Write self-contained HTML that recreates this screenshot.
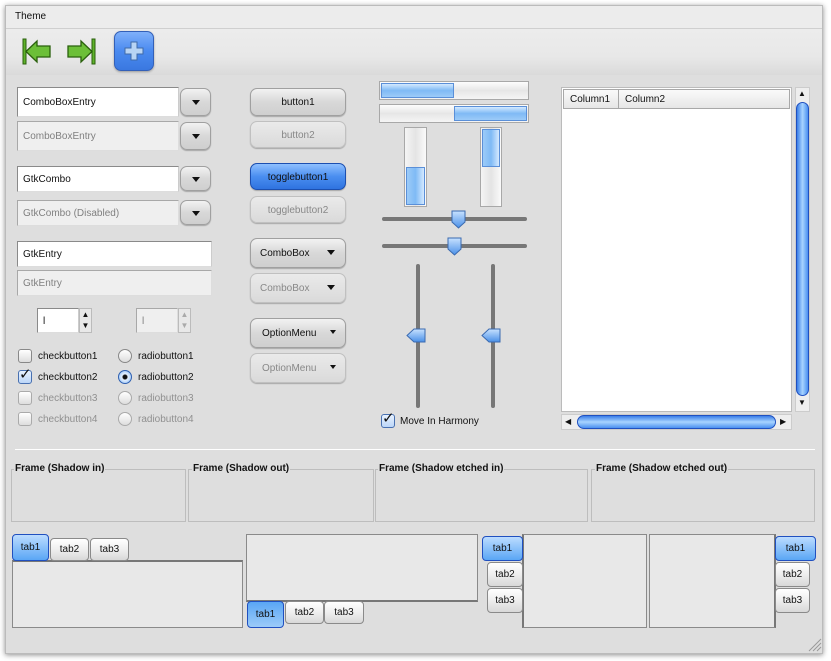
<!DOCTYPE html>
<html><head><meta charset="utf-8"><style>
*{box-sizing:border-box;margin:0;padding:0}
body{width:831px;height:661px;background:#fff;position:relative;overflow:hidden;font-family:"Liberation Sans","DejaVu Sans",sans-serif;font-size:10px;color:#111}
.a{position:absolute}
#win{left:5px;top:5px;width:818px;height:649px;background:#dedede;box-shadow:0 1px 5px rgba(0,0,0,.45);border:1px solid #bbb}
.ent{position:absolute;background:#fff;border:1px solid #8a8a8a;border-right-color:#ccc;border-bottom-color:#ddd;padding-left:5px;display:flex;align-items:center;font-size:10px;padding-top:1px}
.ent.d{background:#efefef;color:#808080;border-color:#a8a8a8 #ddd #ddd #a8a8a8}
.btn{position:absolute;border:1px solid #a0a0a0;border-radius:7px;background:linear-gradient(#f2f2f2,#d8d8d8 50%,#cfcfcf);box-shadow:0 1px 1px rgba(0,0,0,.25);display:flex;align-items:center;justify-content:center;font-size:10px;padding-top:1px}
.btn.d{color:#888;border-color:#c0c0c0;background:linear-gradient(#eaeaea,#dadada)}
.btn.b{background:linear-gradient(#8fc0ff,#4a8ef0 50%,#2f73e0);border-color:#1c4fb0}
.arr{width:0;height:0;border-left:4px solid transparent;border-right:4px solid transparent;border-top:5px solid #111}
.cb{position:absolute;width:14px;height:14px;border:1px solid #888;border-radius:3px;background:linear-gradient(#fff,#ddd)}
.rb{position:absolute;width:14px;height:14px;border:1px solid #888;border-radius:50%;background:linear-gradient(#fff,#ddd)}
.lbl{position:absolute;font-size:10px}
.g{color:#909090}
.fr{position:absolute;border:1px solid #bdbdbd;top:469px;height:53px}
.fl{position:absolute;top:463px;font-size:10px;font-weight:bold;background:#dedede;padding:0 1px}
.tab{position:absolute;border:1px solid #8a8a8a;border-radius:4px;background:linear-gradient(#fff,#eee 50%,#d8d8d8);display:flex;align-items:center;justify-content:center;font-size:10px}
.tab.s{background:linear-gradient(#bcdcff,#5aa6f5);border-color:#2050c0}
.pg{position:absolute;background:#e8e8e8;border:1px solid #8a8a8a}
.pf{position:absolute;background:linear-gradient(#d4e9ff,#7fbaf5 50%,#9ccbf8);border:1px solid #5a8fd8}
.pt{position:absolute;background:linear-gradient(#fdfdfd,#e6e6e6 50%,#f5f5f5);border:1px solid #a8a8a8}
.pv{position:absolute;background:linear-gradient(90deg,#f5f5f5,#e4e4e4 50%,#fafafa);border:1px solid #a8a8a8}
.pfv{position:absolute;background:linear-gradient(90deg,#9ccbf8,#7fbaf5 50%,#d4e9ff);border:1px solid #5a8fd8}
.sp{position:absolute;width:13px;height:25px;border:1px solid #bbb;background:#e8e8e8;font-size:8px;line-height:11px;text-align:center}
</style></head><body>
<div id="win" class="a"></div>
<div class="a" style="left:6px;top:6px;width:816px;height:23px;background:#ececec;border-bottom:1px solid #cfcfcf"></div>
<div class="lbl" style="left:15px;top:11px">Theme</div>
<div class="a" style="left:6px;top:29px;width:816px;height:46px;background:linear-gradient(#ececec,#e8e8e8 60%,#dadada)"></div>
<svg class="a" style="left:20px;top:36px" width="34" height="32"><rect x="3" y="3" width="3" height="25" fill="#5fb22a" stroke="#2a600c"/><path d="M6 15.5 L17 5 V10 H30 V21 H17 V26 Z" fill="#6cbf38" stroke="#2a600c" stroke-width="1.3"/></svg>
<svg class="a" style="left:65px;top:36px" width="34" height="32"><rect x="27" y="3" width="3" height="25" fill="#5fb22a" stroke="#2a600c"/><path d="M27 15.5 L16 5 V10 H3 V21 H16 V26 Z" fill="#6cbf38" stroke="#2a600c" stroke-width="1.3"/></svg>
<div class="a" style="left:114px;top:31px;width:40px;height:40px;border-radius:7px;background:linear-gradient(#7fb0fa,#4a8af0 50%,#3a78e0);border:1px solid #3360b8;box-shadow:0 1px 2px rgba(0,0,0,.3)"></div>
<svg class="a" style="left:122px;top:39px" width="24" height="24"><path d="M9 3H15V9H21V15H15V21H9V15H3V9H9Z" fill="#b8d4f4" stroke="#3f6aa8"/></svg>

<div class="ent" style="left:17px;top:87px;width:162px;height:30px">ComboBoxEntry</div>
<div class="btn" style="left:180px;top:88px;width:31px;height:28px"><div class="arr"></div></div>
<div class="ent d" style="left:17px;top:121px;width:162px;height:30px">ComboBoxEntry</div>
<div class="btn" style="left:180px;top:122px;width:31px;height:28px"><div class="arr"></div></div>
<div class="ent" style="left:17px;top:166px;width:162px;height:26px">GtkCombo</div>
<div class="btn" style="left:180px;top:166px;width:31px;height:25px"><div class="arr"></div></div>
<div class="ent d" style="left:17px;top:200px;width:162px;height:26px">GtkCombo (Disabled)</div>
<div class="btn" style="left:180px;top:200px;width:31px;height:25px"><div class="arr"></div></div>
<div class="ent" style="left:17px;top:241px;width:195px;height:26px">GtkEntry</div>
<div class="ent d" style="left:17px;top:270px;width:195px;height:26px">GtkEntry</div>
<div class="ent" style="left:37px;top:308px;width:42px;height:25px">l</div>
<div class="sp" style="left:79px;top:308px">▲<br>▼</div>
<div class="ent d" style="left:136px;top:308px;width:42px;height:25px">l</div>
<div class="sp" style="left:178px;top:308px;color:#aaa">▲<br>▼</div>

<div class="cb" style="left:18px;top:349px"></div><div class="lbl" style="left:38px;top:351px">checkbutton1</div>
<div class="cb" style="left:18px;top:370px;background:linear-gradient(#e8f2ff,#bcd6f8);border-color:#4870b0"></div><div class="lbl" style="left:19px;top:365px;font-size:15px;font-weight:bold">✓</div><div class="lbl" style="left:38px;top:372px">checkbutton2</div>
<div class="cb" style="left:18px;top:391px;border-color:#aaa"></div><div class="lbl g" style="left:38px;top:393px">checkbutton3</div>
<div class="cb" style="left:18px;top:412px;border-color:#aaa"></div><div class="lbl g" style="left:38px;top:414px">checkbutton4</div>
<div class="rb" style="left:118px;top:349px"></div><div class="lbl" style="left:138px;top:351px">radiobutton1</div>
<div class="rb" style="left:118px;top:370px;background:radial-gradient(circle,#111 0 2px,#e8f2ff 3px,#7db4f4);border-color:#3060b0"></div><div class="lbl" style="left:138px;top:372px">radiobutton2</div>
<div class="rb" style="left:118px;top:391px;border-color:#aaa"></div><div class="lbl g" style="left:138px;top:393px">radiobutton3</div>
<div class="rb" style="left:118px;top:412px;border-color:#aaa"></div><div class="lbl g" style="left:138px;top:414px">radiobutton4</div>

<div class="btn" style="left:250px;top:88px;width:96px;height:28px">button1</div>
<div class="btn d" style="left:250px;top:121px;width:96px;height:27px">button2</div>
<div class="btn b" style="left:250px;top:163px;width:96px;height:27px">togglebutton1</div>
<div class="btn d" style="left:250px;top:196px;width:96px;height:27px">togglebutton2</div>
<div class="btn" style="left:250px;top:238px;width:96px;height:30px;justify-content:flex-start;padding-left:9px">ComboBox<div class="arr" style="position:absolute;right:10px;top:11px"></div></div>
<div class="btn d" style="left:250px;top:273px;width:96px;height:30px;justify-content:flex-start;padding-left:9px">ComboBox<div class="arr" style="position:absolute;right:10px;top:11px"></div></div>
<div class="btn" style="left:250px;top:318px;width:96px;height:30px;justify-content:flex-start;padding-left:11px">OptionMenu<div class="arr" style="position:absolute;right:9px;top:11px;border-width:4px 3px 0"></div></div>
<div class="btn d" style="left:250px;top:353px;width:96px;height:30px;justify-content:flex-start;padding-left:11px">OptionMenu<div class="arr" style="position:absolute;right:9px;top:11px;border-width:4px 3px 0"></div></div>

<div class="pt" style="left:379px;top:81px;width:150px;height:19px"></div>
<div class="pf" style="left:381px;top:83px;width:73px;height:15px"></div>
<div class="pt" style="left:379px;top:104px;width:150px;height:19px"></div>
<div class="pf" style="left:454px;top:106px;width:73px;height:15px"></div>
<div class="pv" style="left:404px;top:127px;width:23px;height:80px"></div>
<div class="pfv" style="left:406px;top:167px;width:19px;height:38px"></div>
<div class="pv" style="left:480px;top:127px;width:22px;height:80px"></div>
<div class="pfv" style="left:482px;top:129px;width:18px;height:38px"></div>
<div class="a" style="left:382px;top:217px;width:145px;height:4px;background:#777;border-radius:2px"></div>
<svg class="a" style="left:450px;top:210px" width="17" height="20"><defs><linearGradient id="t" x1="0" y1="0" x2="0" y2="1"><stop offset="0" stop-color="#c8e2ff"/><stop offset="1" stop-color="#4a90e8"/></linearGradient></defs><path d="M2 1H15V12L8.5 18L2 12Z" fill="url(#t)" stroke="#3a6ab0"/></svg>
<div class="a" style="left:382px;top:244px;width:145px;height:4px;background:#777;border-radius:2px"></div>
<svg class="a" style="left:446px;top:237px" width="17" height="20"><path d="M2 1H15V12L8.5 18L2 12Z" fill="url(#t)" stroke="#3a6ab0"/></svg>
<div class="a" style="left:416px;top:264px;width:4px;height:144px;background:#777;border-radius:2px"></div>
<svg class="a" style="left:406px;top:327px" width="20" height="17"><path d="M19 2V15H8L1 8.5L8 2Z" fill="url(#t)" stroke="#3a6ab0"/></svg>
<div class="a" style="left:491px;top:264px;width:4px;height:144px;background:#777;border-radius:2px"></div>
<svg class="a" style="left:481px;top:327px" width="20" height="17"><path d="M19 2V15H8L1 8.5L8 2Z" fill="url(#t)" stroke="#3a6ab0"/></svg>
<div class="cb" style="left:381px;top:414px;background:linear-gradient(#e8f2ff,#bcd6f8);border-color:#4870b0"></div><div class="lbl" style="left:382px;top:409px;font-size:15px;font-weight:bold">✓</div>
<div class="lbl" style="left:400px;top:416px">Move In Harmony</div>

<div class="a" style="left:561px;top:87px;width:231px;height:325px;background:#fff;border:1px solid #bbb"></div>
<div class="a" style="left:563px;top:89px;width:227px;height:20px;background:linear-gradient(#fafafa,#e6e6e6);border:1px solid #a8a8a8"></div>
<div class="a" style="left:618px;top:89px;width:1px;height:20px;background:#a8a8a8"></div>
<div class="lbl" style="left:570px;top:94px">Column1</div>
<div class="lbl" style="left:625px;top:94px">Column2</div>
<div class="a" style="left:795px;top:87px;width:15px;height:325px;background:#eee;border:1px solid #ccc"></div>
<div class="a" style="left:796px;top:102px;width:13px;height:294px;border-radius:7px;background:linear-gradient(90deg,#3a7ee8,#a8d4ff 50%,#4a90f0);border:1px solid #2050c0"></div>
<div class="lbl" style="left:798px;top:89px;font-size:8px">▲</div>
<div class="lbl" style="left:798px;top:398px;font-size:8px">▼</div>
<div class="a" style="left:561px;top:414px;width:231px;height:16px;background:#eee;border:1px solid #ccc"></div>
<div class="a" style="left:577px;top:415px;width:199px;height:14px;border-radius:7px;background:linear-gradient(#3a7ee8,#a8d4ff 50%,#4a90f0);border:1px solid #2050c0"></div>
<div class="lbl" style="left:565px;top:417px;font-size:8px">◀</div>
<div class="lbl" style="left:780px;top:417px;font-size:8px">▶</div>

<div class="a" style="left:15px;top:449px;width:800px;height:1px;background:#fff"></div>
<div class="fr" style="left:11px;width:175px"></div><div class="fl" style="left:14px">Frame (Shadow in)</div>
<div class="fr" style="left:188px;width:186px"></div><div class="fl" style="left:192px">Frame (Shadow out)</div>
<div class="fr" style="left:375px;width:213px"></div><div class="fl" style="left:378px">Frame (Shadow etched in)</div>
<div class="fr" style="left:591px;width:224px"></div><div class="fl" style="left:595px">Frame (Shadow etched out)</div>

<div class="pg" style="left:12px;top:560px;width:231px;height:68px;border-top:2px solid #777"></div>
<div class="tab s" style="left:12px;top:534px;width:37px;height:27px">tab1</div>
<div class="tab" style="left:50px;top:538px;width:39px;height:23px">tab2</div>
<div class="tab" style="left:90px;top:538px;width:39px;height:23px">tab3</div>
<div class="pg" style="left:246px;top:534px;width:232px;height:68px;border-bottom:2px solid #777"></div>
<div class="tab s" style="left:247px;top:601px;width:37px;height:27px;background:linear-gradient(#5aa6f5,#9ccbf8)">tab1</div>
<div class="tab" style="left:285px;top:601px;width:39px;height:23px">tab2</div>
<div class="tab" style="left:324px;top:601px;width:40px;height:23px">tab3</div>
<div class="pg" style="left:522px;top:534px;width:125px;height:94px;border-left:2px solid #777"></div>
<div class="tab s" style="left:482px;top:536px;width:41px;height:25px">tab1</div>
<div class="tab" style="left:487px;top:562px;width:36px;height:25px">tab2</div>
<div class="tab" style="left:487px;top:588px;width:36px;height:25px">tab3</div>
<div class="pg" style="left:649px;top:534px;width:127px;height:94px;border-right:2px solid #777"></div>
<div class="tab s" style="left:775px;top:536px;width:41px;height:25px">tab1</div>
<div class="tab" style="left:775px;top:562px;width:35px;height:25px">tab2</div>
<div class="tab" style="left:775px;top:588px;width:35px;height:25px">tab3</div>
<svg class="a" style="left:806px;top:636px" width="16" height="16"><path d="M15 3L3 15M15 7L7 15M15 11L11 15" stroke="#999" stroke-width="1"/></svg>
</body></html>
